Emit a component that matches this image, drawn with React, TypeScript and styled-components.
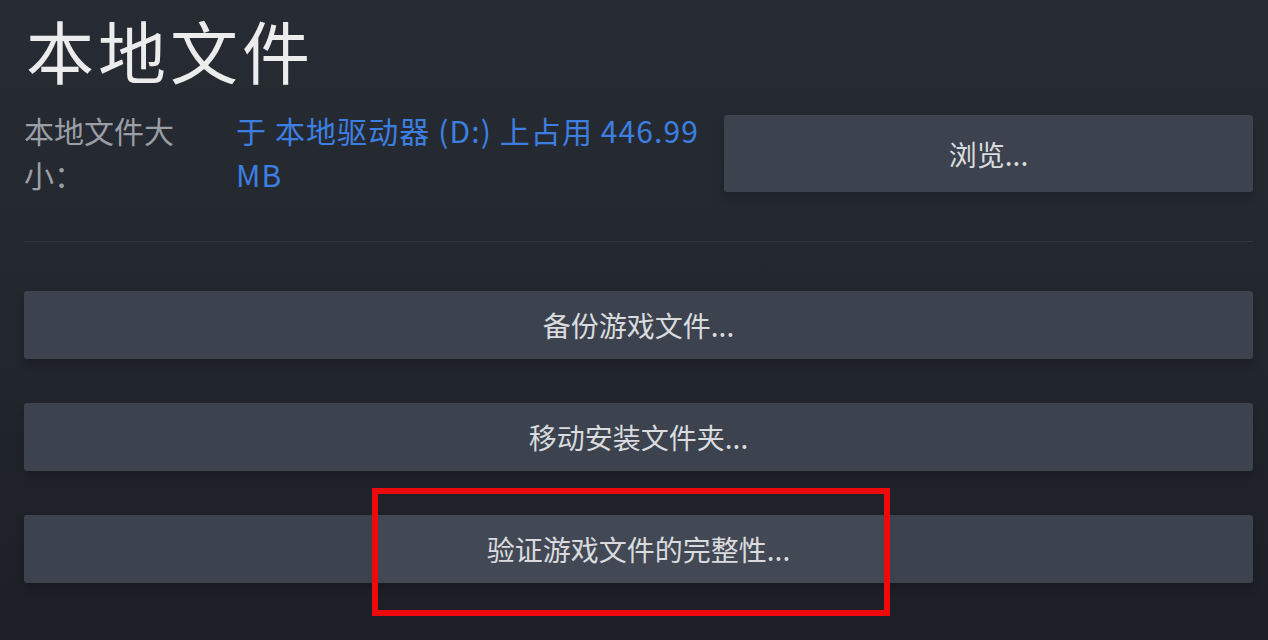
import React from "react";
import styled, { createGlobalStyle } from "styled-components";

const GlobalStyle = createGlobalStyle`
  html, body {
    margin: 0;
    padding: 0;
  }
  body {
    width: 1268px;
    height: 640px;
    overflow: hidden;
    background: linear-gradient(180deg, #272b33 0%, #22262d 55%, #1c1f25 100%);
    font-family: "Noto Sans CJK SC", "Noto Sans", sans-serif;
  }
`;

const Page = styled.div`
  display: flex;
  flex-direction: column;
  padding: 0 15px 0 24px;
`;

const Title = styled.h1`
  margin: 0 0 0 2px;
  font-size: 68px;
  font-weight: 400;
  line-height: normal;
  letter-spacing: 4px;
  color: #ececec;
`;

const SizeRow = styled.div`
  display: flex;
  align-items: flex-start;
  margin-top: 13px;
`;

const Label = styled.div`
  width: 212px;
  flex-shrink: 0;
  font-size: 30px;
  line-height: 44px;
  color: #9a9ea5;
  margin-top: -4px;
  padding-right: 36px;
  box-sizing: border-box;
`;

const SizeValue = styled.div`
  width: 488px;
  padding-right: 12px;
  box-sizing: border-box;
  flex-shrink: 0;
  font-size: 30px;
  line-height: 44px;
  letter-spacing: 1.1px;
  color: #3d7fe0;
  margin-top: -4px;
`;

const ActionButton = styled.button<{ $height?: number }>`
  position: relative;
  display: flex;
  align-items: center;
  justify-content: center;
  width: 100%;
  height: ${(p) => p.$height ?? 68}px;
  border: none;
  border-radius: 3px;
  background: #3c434f;
  color: #d9dbde;
  font-family: "Noto Sans CJK SC", "Noto Sans", sans-serif;
  font-size: 28px;
  padding: 0;
  box-shadow: 0 6px 10px rgba(0, 0, 0, 0.18);
  cursor: pointer;
`;

const BrowseSlot = styled.div`
  flex: 1;
  margin-top: 3px;
`;

const Divider = styled.div`
  height: 1px;
  background: #31363e;
  margin: 45px 0 49px;
`;

const ButtonList = styled.div`
  display: flex;
  flex-direction: column;
  gap: 44px;
`;

const Highlight = styled.div`
  position: absolute;
  left: 348px;
  top: -27px;
  width: 518px;
  height: 128px;
  box-sizing: border-box;
  border: 6px solid #ee0a0a;
  pointer-events: none;
`;

const HoverShade = styled.span`
  position: absolute;
  left: 354px;
  top: 0;
  width: 506px;
  height: 100%;
  background: rgba(255, 255, 255, 0.035);
`;

const Text = styled.span`
  position: relative;
`;

export default function App() {
  return (
    <>
      <GlobalStyle />
      <Page>
        <Title>本地文件</Title>
        <SizeRow>
          <Label>本地文件大小：</Label>
          <SizeValue>于 本地驱动器 (D:) 上占用 446.99 MB</SizeValue>
          <BrowseSlot>
            <ActionButton $height={77}>浏览...</ActionButton>
          </BrowseSlot>
        </SizeRow>
        <Divider />
        <ButtonList>
          <ActionButton>备份游戏文件...</ActionButton>
          <ActionButton>移动安装文件夹...</ActionButton>
          <ActionButton>
            <HoverShade />
            <Text>验证游戏文件的完整性...</Text>
            <Highlight />
          </ActionButton>
        </ButtonList>
      </Page>
    </>
  );
}
